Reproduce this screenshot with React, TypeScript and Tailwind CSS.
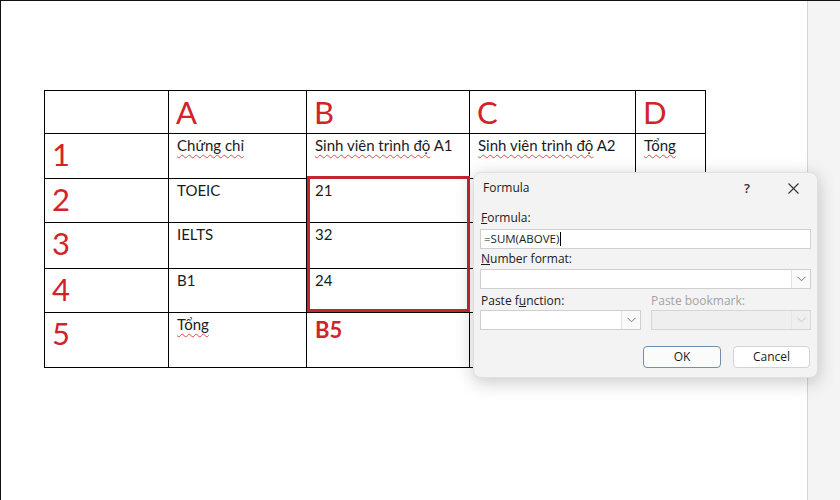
import React from 'react';

const RED = 'text-[#d3232a]';

const colWidths = [124, 138, 163, 166, 70];
const rowHeights = [43, 45, 44, 46, 44, 55];

// spell-check style wavy underline
const Squiggle: React.FC<{ children: React.ReactNode }> = ({ children }) => (
  <span className="underline decoration-wavy decoration-[#e0474c] decoration-1 underline-offset-[3px]">{children}</span>
);

const Chevron: React.FC<{ muted?: boolean }> = ({ muted }) => (
  <svg width="9" height="6" viewBox="0 0 9 6" fill="none">
    <path d="M0.5 0.8 L4.5 4.8 L8.5 0.8" stroke={muted ? '#c4c4c4' : '#7a7a7a'} strokeWidth="1" />
  </svg>
);

const SelectBox: React.FC<{ className?: string; disabled?: boolean }> = ({ className = '', disabled }) => (
  <div
    className={`flex h-[20px] border ${disabled ? 'border-[#d6d6d6] bg-[#efefef]' : 'border-[#cfcfcf] bg-white'} ${className}`}
  >
    <div className="flex-1" />
    <div className={`flex w-[19px] items-center justify-center border-l ${disabled ? 'border-[#e6e6e6]' : 'border-[#e3e3e3] bg-[#fafafa]'}`}>
      <Chevron muted={disabled} />
    </div>
  </div>
);

const FormulaDialog: React.FC = () => (
  <div
    className="absolute left-[472px] top-[171px] flex h-[206px] w-[345px] flex-col rounded-[8px] border border-[#e0e0e0] bg-[#f3f3f3] px-[6px] pb-[9px] pt-[7px] text-[12px] leading-[16px] text-[#1b1b1b] shadow-[0_4px_18px_rgba(0,0,0,0.22)]"
    style={{ fontFamily: '"Open Sans", "Noto Sans", sans-serif' }}
  >
    <div className="flex items-center pl-[3px]">
      <span className="flex-1">Formula</span>
      <span className="mr-[38px] text-[13px] font-semibold text-[#333]">?</span>
      <svg width="11" height="11" viewBox="0 0 11 11" className="mr-[12px]">
        <path d="M0.5 0.5 L10.5 10.5 M10.5 0.5 L0.5 10.5" stroke="#333" strokeWidth="1.1" />
      </svg>
    </div>

    <div className="mt-[14px] pl-[1px]">
      <span className="underline">F</span>ormula:
    </div>
    <div className="mt-[3px] flex h-[20px] items-center border border-[#cfcfcf] bg-white pl-[3px] text-[11.5px]">
      =SUM(ABOVE)
      <span className="ml-px h-[14px] w-px bg-black" />
    </div>

    <div className="mt-[2px] pl-[1px]">
      <span className="underline">N</span>umber format:
    </div>
    <SelectBox className="mt-[2px]" />

    <div className="mt-[4px] flex pl-[1px]">
      <div className="w-[170px]">
        Paste f<span className="underline">u</span>nction:
      </div>
      <div className="text-[#a3a3a3]">Paste bookmark:</div>
    </div>
    <div className="mt-[1px] flex gap-[10px]">
      <SelectBox className="w-[161px]" />
      <SelectBox className="flex-1" disabled />
    </div>

    <div className="mt-auto flex justify-end gap-[12px] pr-px">
      <button className="h-[22px] w-[78px] rounded-[4px] border border-[#6f8fae] bg-[#fbfbfb] text-[12px] text-[#1b1b1b]">
        OK
      </button>
      <button className="h-[22px] w-[77px] rounded-[4px] border border-[#d3d3d3] bg-white text-[12px] text-[#1b1b1b]">
        Cancel
      </button>
    </div>
  </div>
);

export default function App() {
  const headers = ['', 'A', 'B', 'C', 'D'];
  const rows: React.ReactNode[][] = [
    ['1', <Squiggle>Chứng chỉ</Squiggle>, <><Squiggle>Sinh viên trình độ</Squiggle> A1</>, <><Squiggle>Sinh viên trình độ</Squiggle> A2</>, <Squiggle>Tổng</Squiggle>],
    ['2', 'TOEIC', '21', '', ''],
    ['3', 'IELTS', '32', '', ''],
    ['4', 'B1', '24', '', ''],
    ['5', <Squiggle>Tổng</Squiggle>, null, '', ''],
  ];

  return (
    <div className="relative flex h-[500px] w-[840px] overflow-hidden border-l border-t border-[#111] bg-white">
      <div className="flex-1 pl-[43px] pt-[89px]" style={{ fontFamily: 'Lato, "Open Sans", sans-serif' }}>
        <div className="relative w-fit">
          <table className="table-fixed border-collapse">
            <colgroup>
              {colWidths.map((w, i) => (
                <col key={i} style={{ width: w }} />
              ))}
            </colgroup>
            <tbody>
              <tr style={{ height: rowHeights[0] }}>
                {headers.map((h, i) => (
                  <td key={i} className={`border border-black pl-[7px] pt-[6px] align-top text-[31px] leading-none ${RED}`}>
                    {h}
                  </td>
                ))}
              </tr>
              {rows.map((r, ri) => (
                <tr key={ri} style={{ height: rowHeights[ri + 1] }}>
                  <td className={`border border-black pl-[7px] pt-[5px] align-top text-[31px] leading-none ${RED}`}>{r[0]}</td>
                  {r.slice(1).map((c, ci) => (
                    <td key={ci} className="border border-black pl-[8px] pt-[1px] align-top text-[15px] leading-[20px] text-[#1a1a1a]">
                      {c === null ? <span className={`inline-block pt-[3px] text-[22px] font-bold leading-[26px] ${RED}`}>B5</span> : c}
                    </td>
                  ))}
                </tr>
              ))}
            </tbody>
          </table>
          {/* highlight around B2:B4 */}
          <div className="pointer-events-none absolute left-[263px] top-[86px] h-[136px] w-[163px] border-[3px] border-[#c1272d]" />
        </div>
      </div>
      <div className="w-[33px] border-l border-[#d4d4d4] bg-[#f4f4f4]" />
      <FormulaDialog />
    </div>
  );
}
